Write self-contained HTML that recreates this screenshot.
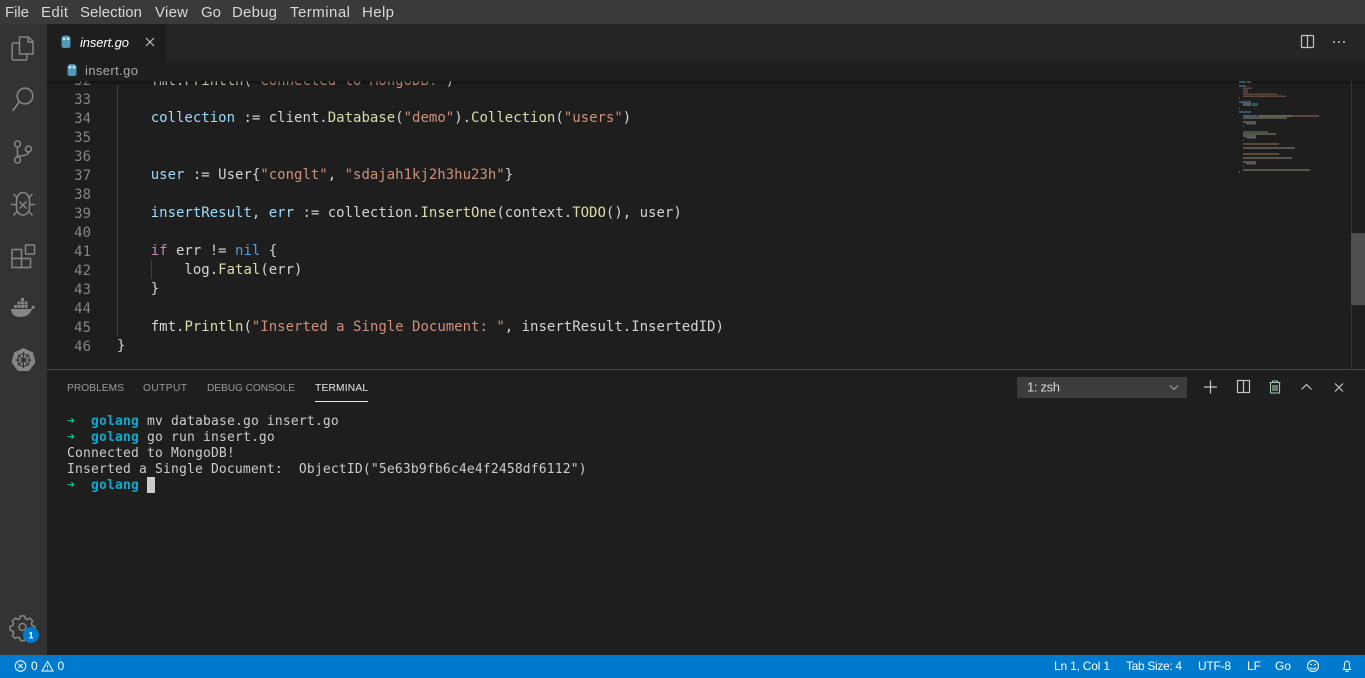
<!DOCTYPE html>
<html><head><meta charset="utf-8"><title>insert.go</title>
<style>
html,body{margin:0;padding:0;width:1365px;height:678px;overflow:hidden;background:#1e1e1e}
.abs{position:absolute}
#code{position:absolute;left:47px;top:81px;width:1184px;height:288px;overflow:hidden;font:14px/19px "DejaVu Sans Mono",monospace;color:#d4d4d4;white-space:pre}
.l{position:absolute;left:70px;height:19px}
.n{position:absolute;left:0;width:44px;text-align:right;color:#858585;height:19px}
.v{color:#9cdcfe}.f{color:#dcdcaa}.s{color:#ce9178}.k{color:#569cd6}.c{color:#c586c0}
#term{position:absolute;left:67px;top:414px;font:13px/16px "DejaVu Sans Mono",monospace;letter-spacing:.17px;color:#cccccc;white-space:pre}
#term b{color:#11a8cd;font-weight:bold}
#term i{font-style:normal;color:#0dbc79;font-weight:bold}
svg{position:absolute;left:0;top:0}
text{font-family:"Liberation Sans",sans-serif}
</style></head>
<body>
<div class="abs" style="left:0;top:0;width:1365px;height:24px;background:#3a3a38"></div>
<div class="abs" style="left:0;top:24px;width:47px;height:631px;background:#333333"></div>
<div class="abs" style="left:47px;top:24px;width:1318px;height:38px;background:#252526"></div>
<div class="abs" style="left:47px;top:24px;width:119px;height:38px;background:#1e1e1e"></div>
<div class="abs" style="left:47px;top:62px;width:1318px;height:19px;background:#1e1e1e"></div>

<div id="code">
<div class="n" style="top:-9px">32</div><div class="l" style="top:-9px">    fmt.<span class="f">Println</span>(<span class="s">"Connected to MongoDB!"</span>)</div>
<div class="n" style="top:10px">33</div>
<div class="n" style="top:29px">34</div><div class="l" style="top:28px">    <span class="v">collection</span> := client.<span class="f">Database</span>(<span class="s">"demo"</span>).<span class="f">Collection</span>(<span class="s">"users"</span>)</div>
<div class="n" style="top:48px">35</div>
<div class="n" style="top:67px">36</div>
<div class="n" style="top:86px">37</div><div class="l" style="top:85px">    <span class="v">user</span> := User{<span class="s">"conglt"</span>, <span class="s">"sdajah1kj2h3hu23h"</span>}</div>
<div class="n" style="top:105px">38</div>
<div class="n" style="top:124px">39</div><div class="l" style="top:123px">    <span class="v">insertResult</span>, <span class="v">err</span> := collection.<span class="f">InsertOne</span>(context.<span class="f">TODO</span>(), user)</div>
<div class="n" style="top:143px">40</div>
<div class="n" style="top:162px">41</div><div class="l" style="top:161px">    <span class="c">if</span> err != <span class="k">nil</span> {</div>
<div class="n" style="top:181px">42</div><div class="l" style="top:180px">        log.<span class="f">Fatal</span>(err)</div>
<div class="n" style="top:200px">43</div><div class="l" style="top:199px">    }</div>
<div class="n" style="top:219px">44</div>
<div class="n" style="top:238px">45</div><div class="l" style="top:237px">    fmt.<span class="f">Println</span>(<span class="s">"Inserted a Single Document: "</span>, insertResult.InsertedID)</div>
<div class="n" style="top:257px">46</div><div class="l" style="top:256px">}</div>
</div>

<div id="term"><i>➜</i>  <b>golang</b> mv database.go insert.go
<i>➜</i>  <b>golang</b> go run insert.go
Connected to MongoDB!
Inserted a Single Document:  ObjectID("5e63b9fb6c4e4f2458df6112")
<i>➜</i>  <b>golang</b></div>

<svg width="1365" height="678" viewBox="0 0 1365 678">
<defs><linearGradient id="sh" x1="0" y1="0" x2="0" y2="1"><stop offset="0" stop-color="#000" stop-opacity=".45"/><stop offset="1" stop-color="#000" stop-opacity="0"/></linearGradient></defs>
<rect x="47" y="81" width="1318" height="4" fill="url(#sh)"/>
<rect x="117" y="85" width="1" height="251" fill="#404040"/>
<rect x="151" y="260" width="1" height="19" fill="#404040"/>
<rect x="1351" y="81" width="1" height="288" fill="#333"/>
<rect x="1351" y="233" width="14" height="72" fill="#4f4f4f"/>
<rect x="47" y="369" width="1318" height="1" fill="#444"/>
<!-- minimap -->
<g opacity=".6">
<rect x="1239" y="81" width="7" height="2" fill="#4d7a9c"/><rect x="1247" y="81" width="4" height="2" fill="#777"/>
<rect x="1239" y="85" width="7" height="2" fill="#4d7a9c"/>
<rect x="1243" y="87.500" width="9" height="1.500" fill="#8a6150"/><rect x="1243" y="89.500" width="5" height="1.500" fill="#8a6150"/><rect x="1243" y="91.500" width="5" height="1.500" fill="#8a6150"/><rect x="1243" y="93.500" width="35" height="1.500" fill="#8a6150"/><rect x="1243" y="95.500" width="43" height="1.500" fill="#8a6150"/>
<rect x="1239" y="97" width="1" height="2" fill="#777"/>
<rect x="1239" y="101" width="12" height="2" fill="#4d7a9c"/>
<rect x="1243" y="103" width="8" height="3" fill="#888"/><rect x="1252" y="103" width="6" height="3" fill="#3c8a78"/>
<rect x="1239" y="107" width="1" height="2" fill="#777"/>
<rect x="1239" y="111" width="12" height="2" fill="#4d7a9c"/>
<rect x="1243" y="115" width="14" height="2" fill="#5c8aa8"/><rect x="1258" y="115" width="34" height="2" fill="#8f8f70"/><rect x="1292" y="115" width="27" height="2" fill="#8a6150"/>
<rect x="1243" y="117" width="44" height="2" fill="#7a7a70"/>
<rect x="1243" y="121" width="13" height="2" fill="#7a7a90"/><rect x="1246" y="123" width="10" height="1.500" fill="#888"/><rect x="1243" y="125" width="1" height="2" fill="#777"/>
<rect x="1243" y="131" width="25" height="2" fill="#5a7a5a"/><rect x="1243" y="133" width="33" height="2" fill="#777"/>
<rect x="1243" y="135" width="13" height="2" fill="#7a7a90"/><rect x="1246" y="137" width="10" height="1.500" fill="#888"/><rect x="1243" y="139" width="1" height="2" fill="#777"/>
<rect x="1243" y="143" width="36" height="2" fill="#8a6150"/>
<rect x="1243" y="147" width="52" height="2" fill="#7a7a70"/>
<rect x="1243" y="153" width="36" height="2" fill="#8a6150"/>
<rect x="1243" y="157" width="49" height="2" fill="#7a7a70"/>
<rect x="1243" y="161" width="13" height="2" fill="#7a7a90"/><rect x="1246" y="163" width="10" height="1.500" fill="#888"/><rect x="1243" y="165" width="1" height="2" fill="#777"/>
<rect x="1243" y="169" width="67" height="2" fill="#8a7a68"/>
<rect x="1239" y="171" width="1" height="2" fill="#777"/>
</g>
<!-- menu -->
<g font-size="15" fill="#d7d7d7">
<text x="5" y="17" textLength="24">File</text>
<text x="41" y="17" textLength="27">Edit</text>
<text x="80" y="17" textLength="62">Selection</text>
<text x="155" y="17" textLength="33">View</text>
<text x="201" y="17">Go</text>
<text x="232" y="17" textLength="45">Debug</text>
<text x="290" y="17" textLength="60">Terminal</text>
<text x="362" y="17" textLength="32">Help</text>
</g>
<!-- tab -->
<path d="M61.500 38.500c0-2 1.800-3 4.500-3s4.500 1 4.500 3v7.500c0 1.500-1.300 2-4.500 2s-4.500-.5-4.500-2z" fill="#519aba"/><circle cx="64" cy="38.800" r="1.300" fill="#dfeef5"/><circle cx="68" cy="38.800" r="1.300" fill="#dfeef5"/>
<text x="80" y="47" font-size="13" font-style="italic" fill="#ffffff" textLength="49">insert.go</text>
<path d="M146 38l8 8M154 38l-8 8" stroke="#c8c8c8" stroke-width="1.100" fill="none"/>
<path d="M67.500 67c0-2 1.800-3 4.500-3s4.500 1 4.500 3v7c0 1.500-1.300 2-4.500 2s-4.500-.5-4.500-2z" fill="#519aba"/><circle cx="70" cy="67.300" r="1.300" fill="#dfeef5"/><circle cx="74" cy="67.300" r="1.300" fill="#dfeef5"/>
<text x="85" y="75" font-size="13" fill="#a9a9a9" textLength="53">insert.go</text>
<!-- editor actions -->
<rect x="1301.500" y="35.500" width="12" height="12" rx="1" fill="none" stroke="#c5c5c5" stroke-width="1.200"/><path d="M1307.500 35.500v12" stroke="#c5c5c5" stroke-width="1.200"/>
<circle cx="1334" cy="42" r="1" fill="#c5c5c5"/><circle cx="1339" cy="42" r="1" fill="#c5c5c5"/><circle cx="1344" cy="42" r="1" fill="#c5c5c5"/>
<!-- activity icons -->
<g fill="none" stroke="#858585" stroke-width="1.500">
<path d="M19 43h-5.500c-.8 0-1.300.5-1.300 1.300v14.400c0 .8.500 1.300 1.300 1.300h12c.8 0 1.300-.5 1.300-1.300v-4.700"/>
<path d="M19.500 37h9l4.500 4.500v12.500h-13.500z"/><path d="M28 37v5h5"/>
<circle cx="25" cy="96" r="7.800" stroke-width="1.600"/><path d="M19.500 101.500L12.500 111" stroke-width="1.700"/>
<circle cx="17.500" cy="144" r="3"/><circle cx="17.500" cy="160" r="3"/><circle cx="28.500" cy="149" r="3"/><path d="M17.500 147v10M17.500 156c5 0 11-.5 11-4"/>
<path d="M16.500 201c0-5 3-8.500 6.500-8.500s6.500 3.500 6.500 8.500v7c0 4-3 7-6.500 7s-6.500-3-6.500-7z"/><path d="M19.500 201.500l7 7M26.500 201.500l-7 7M16.500 204.500h-5.500M29.500 204.500h5.500M17.500 198l-4-4M28.500 198l4-4M17.500 211l-4 4.500M28.500 211l4 4.500"/>
<path d="M12 249.500h9.500v9H12zM12 258.500h9.500v9H12zM21.500 258.500h9v9h-9z"/>
<rect x="25.500" y="245" width="9" height="9" rx=".8"/>
</g>
<!-- docker -->
<g fill="#858585">
<path d="M11 309h19c1.500 0 1.800-1.300 2-3 1-.8 2-.2 2.500.8l.5 1c-.8.8-1.800 1.200-3 1.200-1.200 4.500-5.500 8-11.500 8-6.500 0-9.500-3.500-9.500-8z"/>
<rect x="14" y="305" width="3" height="3"/><rect x="17.500" y="305" width="3" height="3"/><rect x="21" y="305" width="3" height="3"/><rect x="24.500" y="305" width="3" height="3"/>
<rect x="17.500" y="301.500" width="3" height="3"/><rect x="21" y="301.500" width="3" height="3"/><rect x="24.500" y="301.500" width="3" height="3"/><rect x="21" y="298" width="3" height="3"/>
</g>
<!-- kubernetes -->
<path d="M23.500 348l9.500 4.500 2.500 10-6.500 8.500h-11l-6.500-8.500 2.500-10z" fill="#858585"/>
<g fill="none" stroke="#333" stroke-width="1.100"><circle cx="23.500" cy="360" r="6"/><circle cx="23.500" cy="360" r="1.500" fill="#333"/><path d="M23.500 352v16M15.500 360h16M18 354.500l11 11M29 354.500l-11 11"/></g>
<!-- gear -->
<g fill="none" stroke="#858585" stroke-width="1.500">
<path d="M20.500 616h4l.8 2.700 2 .8 2.500-1.300 2.800 2.800-1.300 2.500.8 2 2.700.8v4l-2.700.8-.8 2 1.300 2.500-2.800 2.800-2.500-1.300-2 .8-.8 2.700h-4l-.8-2.700-2-.8-2.500 1.300-2.800-2.800 1.300-2.500-.8-2-2.700-.8v-4l2.700-.8.8-2-1.300-2.500 2.800-2.800 2.500 1.300 2-.8z"/>
<circle cx="22.500" cy="627" r="3.500"/></g>
<circle cx="31" cy="635" r="8" fill="#007acc"/>
<text x="31" y="638.500" font-size="9.500" font-weight="bold" fill="#fff" text-anchor="middle">1</text>
<!-- panel tabs -->
<g font-size="10.200">
<text x="67" y="391" fill="#9a9a9a" textLength="57">PROBLEMS</text>
<text x="143" y="391" fill="#9a9a9a" textLength="44">OUTPUT</text>
<text x="207" y="391" fill="#9a9a9a" textLength="88">DEBUG CONSOLE</text>
<text x="315" y="391" fill="#e7e7e7" textLength="53">TERMINAL</text>
</g>
<rect x="315" y="401" width="53" height="1" fill="#e7e7e7"/>
<!-- terminal select -->
<rect x="1017" y="377" width="170" height="21" fill="#3c3c3c"/>
<text x="1027" y="391.500" font-size="13" fill="#d8d8d8" textLength="33">1: zsh</text>
<path d="M1170 385.500l4 4 4-4" fill="none" stroke="#a0a0a0" stroke-width="1.100"/>
<path d="M1210.500 380.500v13M1204 387h13" stroke="#c5c5c5" stroke-width="1.200" fill="none"/>
<rect x="1237.500" y="380.500" width="12" height="12" fill="none" stroke="#c5c5c5" stroke-width="1.200"/><path d="M1243.500 380.500v12" stroke="#c5c5c5" stroke-width="1.200"/>
<path d="M1269.500 382.500h11M1272.500 382.500v-1.500h5v1.500M1270.500 382.500v10.500h9v-10.500M1273 385v6M1275 385v6M1277 385v6" fill="none" stroke="#a5c6ad" stroke-width="1.100"/>
<path d="M1301.500 389.500l5-5 5 5" fill="none" stroke="#c5c5c5" stroke-width="1.200"/>
<path d="M1335 383.500l8 8M1343 383.500l-8 8" fill="none" stroke="#c5c5c5" stroke-width="1.200"/>
<!-- cursor -->
<rect x="147" y="477" width="8" height="16" fill="#cccccc"/>
<!-- status bar -->
<rect x="0" y="655" width="1365" height="23" fill="#007acc"/>
<circle cx="20.500" cy="666" r="5.300" fill="none" stroke="#fff" stroke-width="1"/><path d="M18.300 663.800l4.400 4.400M22.700 663.800l-4.400 4.400" stroke="#fff" fill="none"/>
<text x="31" y="670" font-size="12" fill="#fff">0</text>
<path d="M47.500 661.500l5.500 9.500h-11z" fill="none" stroke="#fff"/><path d="M47.500 665v3M47.500 669v1" stroke="#fff" stroke-width=".8"/>
<text x="57.500" y="670" font-size="12" fill="#fff">0</text>
<g font-size="12" fill="#fff">
<text x="1054" y="670" textLength="56">Ln 1, Col 1</text>
<text x="1126" y="670" textLength="56">Tab Size: 4</text>
<text x="1198" y="670" textLength="33">UTF-8</text>
<text x="1247" y="670">LF</text>
<text x="1275" y="670">Go</text>
</g>
<circle cx="1313" cy="666" r="5.500" fill="none" stroke="#fff"/><circle cx="1311" cy="664.500" r=".8" fill="#fff"/><circle cx="1315" cy="664.500" r=".8" fill="#fff"/><path d="M1310 667.500c1 2 5 2 6 0" fill="none" stroke="#fff"/>
<path d="M1343.500 669.500c1-1.500 1-3 1-5 0-2 1-3.500 2.500-3.500s2.500 1.500 2.500 3.500c0 2 0 3.500 1 5zM1345.500 670.500c.3 1.300 2.700 1.300 3 0" fill="none" stroke="#fff"/>
</svg>
</body></html>
